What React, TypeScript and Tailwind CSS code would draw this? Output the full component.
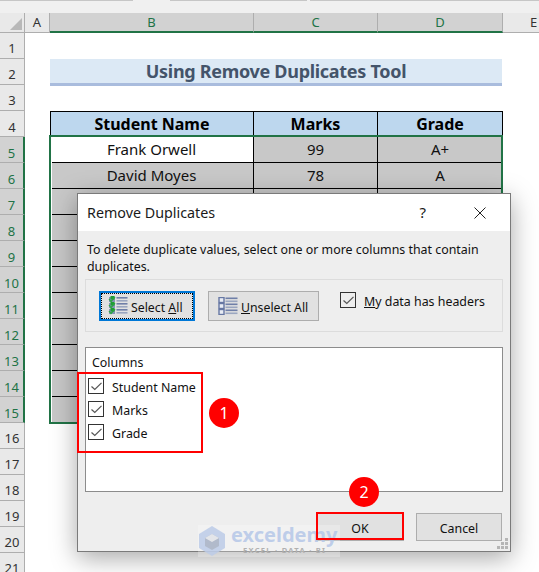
const sans = "font-['Noto_Sans','Open_Sans',sans-serif]";

function Check() {
  return (
    <span className="flex h-4 w-4 shrink-0 items-center justify-center border border-[#333333]">
      <svg width="11" height="9" viewBox="0 0 11 9" fill="none">
        <path d="M0.5 4.5 L3.8 7.5 L10.5 0.8" stroke="#555555" strokeWidth="1.2" />
      </svg>
    </span>
  );
}

function SelectIcon() {
  return (
    <svg width="20" height="19" viewBox="0 0 20 19" className="shrink-0">
      {[1, 7, 13].map((y) => (
        <g key={y}>
          <rect x="1" y={y} width="6" height="5" fill="#8494b5" />
          <rect x="2.5" y={y - 1} width="4" height="3.5" fill="#1f9d35" />
          <path d={`M1 ${y + 2} L3 ${y + 4.5} L7 ${y}`} stroke="#2aa63e" fill="none" strokeWidth="1.2" />
        </g>
      ))}
      {[1, 4, 7, 10, 13, 16].map((y, i) => (
        <rect key={y} x="8.5" y={y} width="11" height="1.6" fill={i % 2 ? "#9aa6c0" : "#6f7fa8"} />
      ))}
    </svg>
  );
}

function UnselectIcon() {
  return (
    <svg width="20" height="18" viewBox="0 0 20 18" className="shrink-0">
      {[0.5, 6.5, 12.5].map((y) => (
        <rect key={y} x="1" y={y} width="5" height="5" fill="#e8ecf4" stroke="#6677a3" strokeWidth="1.4" />
      ))}
      {[0.5, 3.5, 6.5, 9.5, 12.5, 15.5].map((y, i) => (
        <rect key={y} x="7.5" y={y} width="12" height="1.6" fill={i % 2 ? "#9aa6c0" : "#6f7fa8"} />
      ))}
    </svg>
  );
}

function Row({ n, name, mark, grade, white }: { n: number; name?: string; mark?: string; grade?: string; white?: boolean }) {
  return (
    <div className="flex h-[26px] text-[15px] leading-[24px] text-[#111]">
      <div className="flex w-[25px] items-center justify-center border-b border-r-2 border-b-[#aeaeae] border-r-[#217346] bg-[#d2d2d2] pt-[7px] text-[13px] text-[#217346]">
        {n}
      </div>
      <div className="w-[25px]" />
      <div className={`w-[204px] border-b border-r border-black text-center ${white ? "bg-white" : "bg-[#c8c8c8]"}`}>{name}</div>
      <div className="w-[124px] border-b border-r border-black bg-[#c8c8c8] text-center">{mark}</div>
      <div className="w-[125px] border-b border-r border-black bg-[#c8c8c8] text-center">{grade}</div>
    </div>
  );
}

function PlainRow({ n, children }: { n: number; children?: React.ReactNode }) {
  return (
    <div className="flex h-[26px]">
      <div className="flex w-[25px] items-center justify-center border-b border-r border-[#aeaeae] bg-[#e9e9e9] pt-[7px] text-[13px] text-[#333]">{n}</div>
      {children}
    </div>
  );
}

export default function App() {
  return (
    <div className={`relative h-[572px] w-[539px] overflow-hidden bg-white ${sans}`}>
      {/* top strip */}
      <div className="flex h-[13px] items-start bg-[#f0f0f0]">
        <div className="h-px w-[133px] bg-[#c6c6c6]" />
        <div className="ml-[37px] h-px w-[137px] bg-[#c6c6c6]" />
        <div className="ml-[3px] h-px flex-1 bg-[#c6c6c6]" />
      </div>

      {/* column headers */}
      <div className="flex h-[20px] text-[13px] leading-[19px]">
        <div className="flex w-[25px] items-end justify-end border-b border-r border-[#aeaeae] bg-[#e9e9e9] p-[2px]">
          <div className="h-0 w-0 border-b-[12px] border-l-[12px] border-b-[#b8b8b8] border-l-transparent" />
        </div>
        <div className="w-[25px] border-b border-r border-[#aeaeae] bg-[#e9e9e9] text-center text-[#333]">A</div>
        <div className="w-[204px] border-b-2 border-r border-b-[#217346] border-r-[#aeaeae] bg-[#d2d2d2] text-center text-[#217346]">B</div>
        <div className="w-[124px] border-b-2 border-r border-b-[#217346] border-r-[#aeaeae] bg-[#d2d2d2] text-center text-[#217346]">C</div>
        <div className="w-[125px] border-b-2 border-r border-b-[#217346] border-r-[#aeaeae] bg-[#d2d2d2] text-center text-[#217346]">D</div>
        <div className="flex-1 border-b border-[#aeaeae] bg-[#e9e9e9] pl-[27px] text-[#333]">E</div>
      </div>

      <PlainRow n={1} />
      <PlainRow n={2}>
        <div className="ml-[25px] h-[27px] w-[452px] border-b-[3px] border-[#a9bcdd] bg-[#dce9f5] text-center text-[18px] font-bold leading-[24px] tracking-[-0.3px] text-[#44546a]">
          Using Remove Duplicates Tool
        </div>
      </PlainRow>
      <PlainRow n={3} />
      <div className="flex h-[26px] text-[16px] font-bold leading-[24px] text-black">
        <div className="flex w-[25px] items-center justify-center border-b border-r border-[#aeaeae] bg-[#e9e9e9] pt-[7px] text-[13px] font-normal text-[#333]">4</div>
        <div className="w-[25px]" />
        <div className="w-[204px] border border-black bg-[#bdd7ee] text-center">Student Name</div>
        <div className="w-[124px] border-y border-r border-black bg-[#bdd7ee] text-center">Marks</div>
        <div className="w-[125px] border-y border-r border-black bg-[#bdd7ee] text-center">Grade</div>
      </div>

      <Row n={5} white name="Frank Orwell" mark="99" grade="A+" />
      <Row n={6} name="David Moyes" mark="78" grade="A" />
      {[7, 8, 9, 10, 11, 12, 13, 14, 15].map((n) => (
        <Row key={n} n={n} />
      ))}
      {[16, 17, 18, 19, 20, 21].map((n) => (
        <PlainRow key={n} n={n} />
      ))}

      {/* selection outline */}
      <div className="absolute left-[49px] top-[135px] h-[289px] w-[454px] border-2 border-[#217346]">
        <div className="h-full w-px bg-white" />
      </div>

      {/* dialog */}
      <div className="absolute left-[77px] top-[193px] flex h-[359px] w-[434px] flex-col border border-[#7a7a7a] bg-[#eeeeee] shadow-[0_6px_24px_rgba(0,0,0,0.35)]">
        <div className="flex h-[37px] shrink-0 items-center justify-between bg-white pl-[9px] pr-[24px] text-[14.3px] text-[#1a1a1a]">
          <span>Remove Duplicates</span>
          <div className="flex items-center gap-[48px]">
            <span className="text-[15px]">?</span>
            <svg width="12" height="12" viewBox="0 0 12 12"><path d="M0.5 0.5 L11.5 11.5 M11.5 0.5 L0.5 11.5" stroke="#222" strokeWidth="1" /></svg>
          </div>
        </div>
        <div className="pl-[9px] pr-[7px] pt-[10px] text-[12.4px] leading-[17px] text-[#111]">
          To delete duplicate values, select one or more columns that contain duplicates.
        </div>
        <div className="mx-[7px] mt-[4px] flex h-[53px] items-center border border-[#dcdcdc] px-[13px] text-[12.3px] text-[#111]">
          <button className="flex h-[30px] w-[96px] items-center gap-[3px] border-2 border-[#0078d7] bg-[#e1e1e1] pl-[7px] outline-1 -outline-offset-3 outline-dotted outline-black">
            <SelectIcon />
            <span className="pt-[5px]">Select <u>A</u>ll</span>
          </button>
          <button className="ml-[13px] flex h-[30px] w-[111px] items-center gap-[3px] border border-[#adadad] bg-[#e1e1e1] pl-[9px]">
            <UnselectIcon />
            <span className="pt-[5px]"><u>U</u>nselect All</span>
          </button>
          <div className="ml-[21px] flex items-start gap-[8px] self-start pt-[12px]">
            <Check />
            <span className="pt-[1px] text-[12.4px] leading-[18px]"><u>M</u>y data has headers</span>
          </div>
        </div>
        <div className="mx-[7px] mt-[15px] flex h-[145px] flex-col border border-[#8c8c8c] bg-white text-[12.4px] text-[#111]">
          <div className="pl-[6px] pt-[6px] leading-[18px]">Columns</div>
          <div className="mt-[6px] flex flex-col gap-[7px] pl-[2px]">
            {["Student Name", "Marks", "Grade"].map((t) => (
              <div key={t} className="flex h-[16px] items-center gap-[8px]">
                <Check />
                <span className="pt-[5px]">{t}</span>
              </div>
            ))}
          </div>
        </div>
        <div className="mr-[8px] mt-[21px] flex justify-end gap-[12px] text-[12.4px] text-[#111]">
          <button className="h-[28px] w-[88px] border border-[#adadad] bg-[#e1e1e1] pt-[4px]">OK</button>
          <button className="h-[28px] w-[86px] border border-[#adadad] bg-[#e1e1e1] pt-[4px]">Cancel</button>
        </div>
        <svg width="12" height="12" viewBox="0 0 12 12" className="absolute bottom-[1px] right-[1px]">
          {[[8, 0], [4, 4], [8, 4], [0, 8], [4, 8], [8, 8]].map(([x, y]) => (
            <rect key={`${x}-${y}`} x={x} y={y} width="3" height="3" fill="#b5b5b5" />
          ))}
        </svg>
      </div>

      {/* watermark */}
      <div className="absolute left-[198px] top-[525px] flex h-[32px] w-[142px] items-start gap-[5px] bg-white/25">
        <svg width="28" height="32" viewBox="0 0 28 32" className="shrink-0">
          <path d="M14 1 L27 9 V23 L14 31 L1 23 V9 Z" fill="#bccbe8" fillOpacity="0.85" />
          <path d="M14 9 L21 13 V21 L14 25 L7 21 V13 Z" fill="#aab0bd" fillOpacity="0.7" />
          <path d="M14 9 L21 13 L14 17 L7 13 Z" fill="#f0f0f0" fillOpacity="0.8" />
        </svg>
        <div className="flex flex-col">
          <span className="text-[20px] font-bold leading-[19px] text-[#b5c7e8]/85">exceldemy</span>
          <span className="pl-[12px] pt-[2px] text-[7.5px] font-bold leading-[9px] tracking-[1.3px] text-[#b0b0b0]">EXCEL · DATA · BI</span>
        </div>
      </div>

      {/* annotations */}
      <div className="absolute left-[77px] top-[372px] h-[81px] w-[126px] border-2 border-[#ff0000]" />
      <div className="absolute left-[316px] top-[512px] h-[28px] w-[88px] border-2 border-[#ff0000]" />
      <div className="absolute left-[209px] top-[398px] flex h-[30px] w-[30px] items-center justify-center rounded-full bg-[#ff0000] text-[16px] text-white">1</div>
      <div className="absolute left-[349px] top-[477px] flex h-[30px] w-[30px] items-center justify-center rounded-full bg-[#ff0000] text-[16px] text-white">2</div>
    </div>
  );
}
